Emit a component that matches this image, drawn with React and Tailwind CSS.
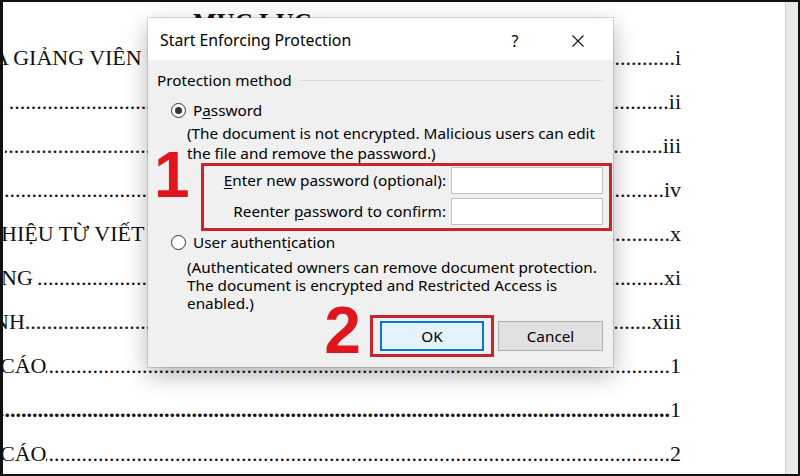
import React from "react";

const DOTS = ".".repeat(220);

// visible table-of-contents rows behind the dialog
const ROWS = [
  { label: "A GIẢNG VIÊN ", shift: "-ml-[10px]", page: "i" },
  { label: "", shift: "ml-[7px]", page: "ii" },
  { label: "", shift: "ml-[2px]", page: "iii" },
  { label: "", shift: "ml-[0px]", page: "iv" },
  { label: "HIỆU TỪ VIẾT ", shift: "-ml-[2px]", page: "x" },
  { label: "NG ", shift: "-ml-[2px]", page: "xi" },
  { label: "NH", shift: "-ml-[10px]", page: "xiii" },
  { label: "CÁO", shift: "-ml-[3px]", page: "1" },
  { label: "", shift: "-ml-[2px]", page: "1", bold: true },
  { label: "CÁO", shift: "-ml-[3px]", page: "2" },
];

function TocRow({ row }) {
  return (
    <div className="h-[44px] flex items-center">
      <div className={`flex-1 flex items-baseline min-w-0 ${row.shift}`}>
        {row.label && <span className="whitespace-pre">{row.label}</span>}
        <span className={`flex-1 min-w-0 flex justify-end overflow-hidden whitespace-nowrap ${row.bold ? "font-bold" : ""}`}>
          <span>{DOTS}</span>
        </span>
        <span className="whitespace-nowrap">{row.page}</span>
      </div>
    </div>
  );
}

function Radio({ checked }) {
  return (
    <span className="w-[15px] h-[15px] rounded-full border border-[#333] bg-white flex items-center justify-center shrink-0">
      {checked && <span className="w-[7px] h-[7px] rounded-full bg-[#333]" />}
    </span>
  );
}

function Dialog() {
  return (
    <div
      className="absolute left-[145px] top-[16px] w-[465px] h-[349px] flex flex-col bg-[#f0f0f0] text-[15.3px] text-black shadow-[0_0_0_1px_rgba(0,0,0,0.12),0_8px_22px_rgba(0,0,0,0.3)]"
      style={{ fontFamily: '"Noto Sans", "Open Sans", sans-serif' }}
    >
      <div className="h-[42px] bg-white flex items-center pt-[4px] pl-[12px] pr-[29px]">
        <span className="flex-1 text-[15.8px]">Start Enforcing Protection</span>
        <span className="w-[14px] text-center text-[16px]">?</span>
        <svg className="ml-[50px]" width="12" height="12" viewBox="0 0 12 12">
          <path d="M0.5 0.5 L11.5 11.5 M11.5 0.5 L0.5 11.5" stroke="#111" strokeWidth="1.1" fill="none" />
        </svg>
      </div>

      <div className="relative flex-1 pl-[9px] pt-[10px]">
        <div className="h-[20px] flex items-center pr-[11px]">
          <span>Protection method</span>
          <span className="flex-1 h-px bg-[#d9d9d9] ml-[8px]" />
        </div>

        <div className="mt-[10px] h-[20px] flex items-center pl-[14px]">
          <Radio checked />
          <span className="ml-[7px]">
            P<u className="underline-offset-2">a</u>ssword
          </span>
        </div>
        <div className="mt-[3px] pl-[30px] leading-[20px] whitespace-nowrap">
          (The document is not encrypted. Malicious users can edit
          <br />
          the file and remove the password.)
        </div>

        <span
          className="absolute left-[6px] top-[83px] text-[64px] font-bold leading-none text-[#e0161d]"
          style={{ fontFamily: '"Liberation Sans", Arial, sans-serif' }}
        >
          1
        </span>

        <div className="ml-[44px] w-[411px] border-[3px] border-[#c9262c] pt-[1px] pb-[3px] pr-[6px] flex flex-col gap-[4px]">
          <div className="flex items-center justify-end gap-[5px]">
            <span>
              <u className="underline-offset-2">E</u>nter new password (optional):
            </span>
            <span className="w-[152px] h-[27px] bg-white border border-[#c2c2c2]" />
          </div>
          <div className="flex items-center justify-end gap-[5px]">
            <span>
              Reenter <u className="underline-offset-2">p</u>assword to confirm:
            </span>
            <span className="w-[152px] h-[27px] bg-white border border-[#c2c2c2]" />
          </div>
        </div>

        <div className="mt-[1px] h-[20px] flex items-center pl-[14px]">
          <Radio />
          <span className="ml-[7px]">
            User authent<u className="underline-offset-2">i</u>cation
          </span>
        </div>
        <div className="mt-[6px] pl-[30px] leading-[18px] whitespace-nowrap">
          (Authenticated owners can remove document protection.
          <br />
          The document is encrypted and Restricted Access is
          <br />
          enabled.)
        </div>

        <div className="mt-[3px] flex items-start justify-end pr-[10px]">
          <span
            className="-mt-[18px] mr-[9px] text-[66px] font-bold leading-none text-[#e0161d]"
            style={{ fontFamily: '"Liberation Sans", Arial, sans-serif' }}
          >
            2
          </span>
          <div className="border-[3px] border-[#c9262c] px-[7px] py-[3px]">
            <div className="w-[104px] h-[30px] border-2 border-[#0078d7] bg-[#e5f1fb] flex items-center justify-center">
              OK
            </div>
          </div>
          <div className="mt-[6px] ml-[4px] w-[105px] h-[30px] bg-[#e1e1e1] border border-[#adadad] flex items-center justify-center">
            Cancel
          </div>
        </div>
      </div>
    </div>
  );
}

export default function App() {
  return (
    <div className="w-[800px] h-[476px] bg-[#111] pt-[2px] pb-[2px] pl-[3px] pr-[2px] flex overflow-hidden">
      <div
        className="relative flex-1 bg-white overflow-hidden text-[22px] text-[#111]"
        style={{ fontFamily: '"Liberation Serif", "Times New Roman", serif' }}
      >
        <div className="flex flex-col pr-[104px]">
          <div className="h-[33px] pl-[190px]">
            <span className="block mt-[8px] text-[25px] leading-[25px] font-bold">MỤC LỤC</span>
          </div>
          {ROWS.map((row, i) => (
            <TocRow key={i} row={row} />
          ))}
        </div>
        <Dialog />
      </div>
      <div className="w-[13px] bg-[#e9e9e9] border-l border-[#d0d0d0]" />
    </div>
  );
}
